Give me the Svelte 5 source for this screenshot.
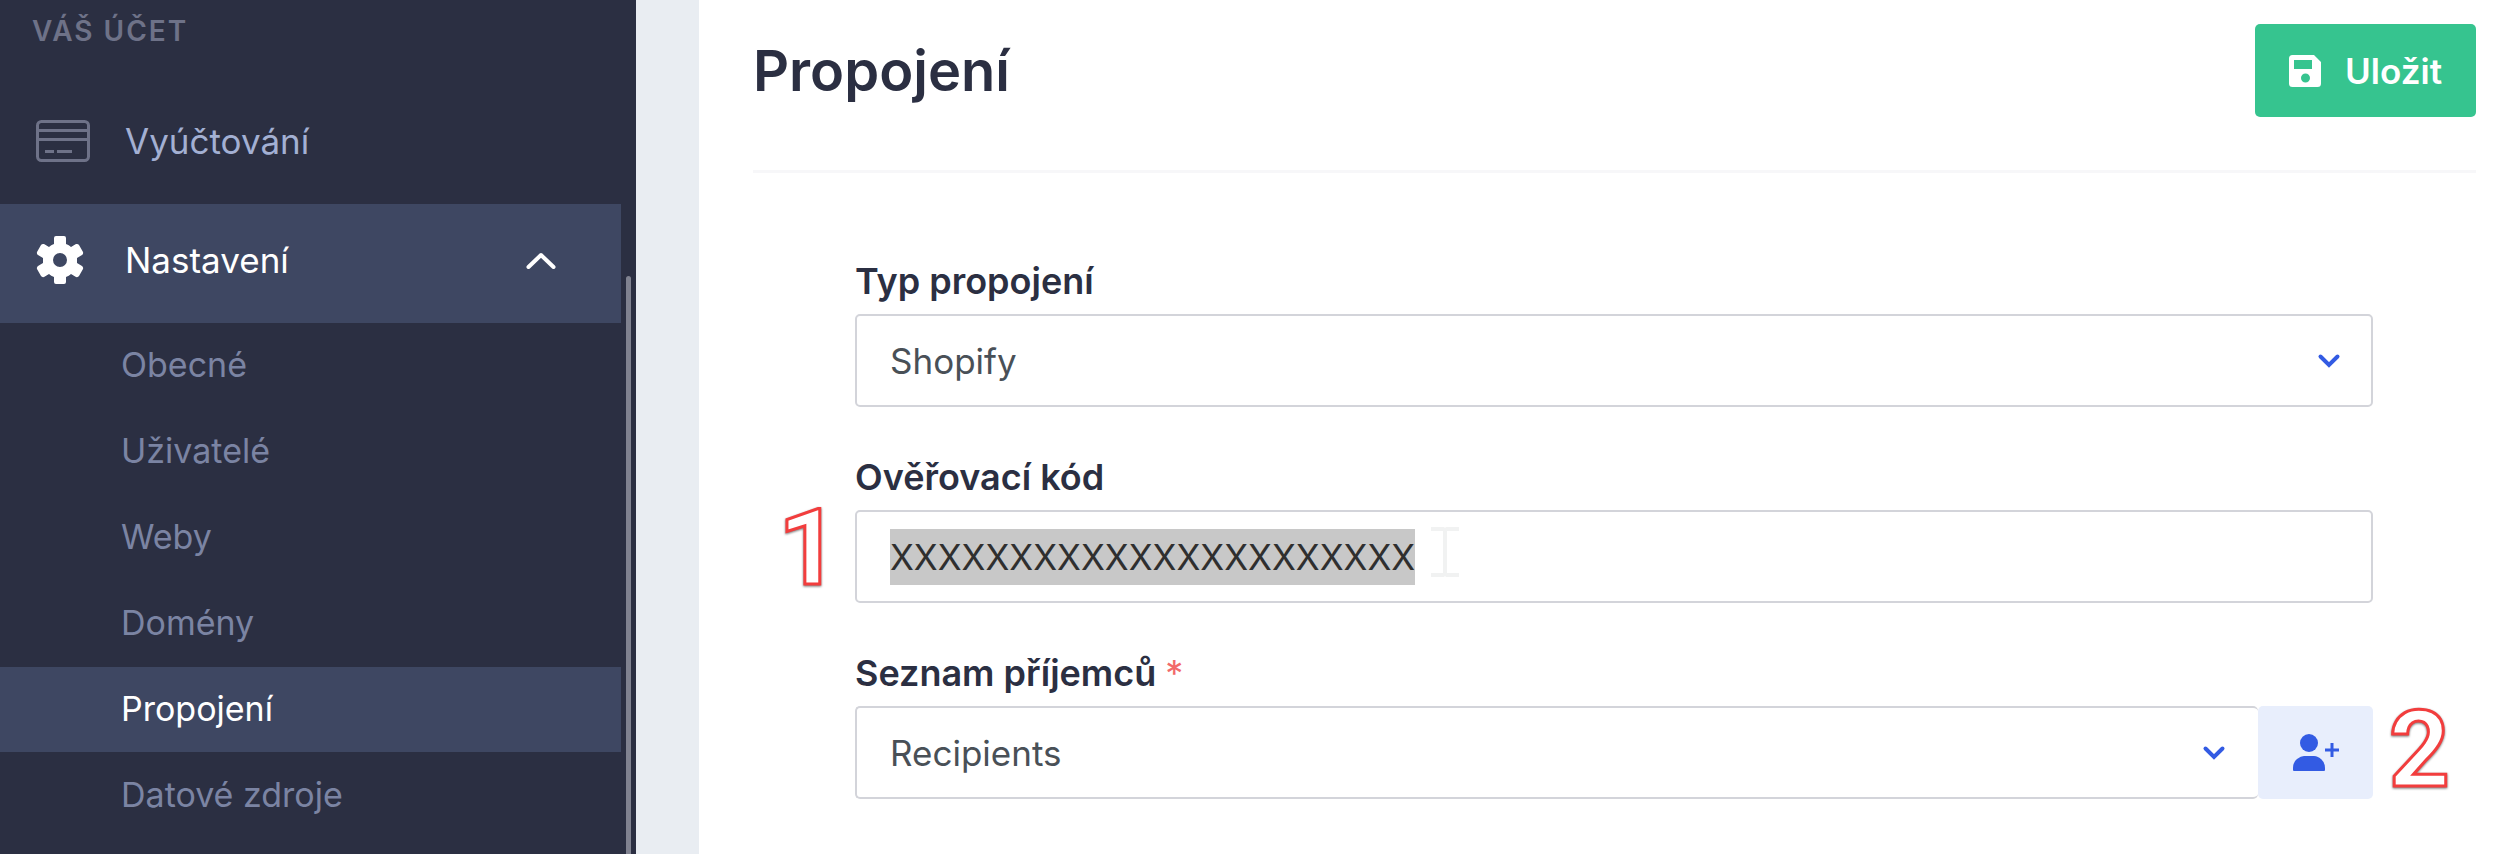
<script lang="ts">
  import { onMount } from 'svelte';

  const settings = ['Obecné', 'Uživatelé', 'Weby', 'Domény', 'Propojení', 'Datové zdroje'];

  let current = $state('Propojení');
  let open = $state(true);
  let type = $state('Shopify');
  let code = $state('XXXXXXXXXXXXXXXXXXXXXX');
  let list = $state('Recipients');
  let codeInput: HTMLInputElement;

  onMount(() => {
    codeInput.focus();
    codeInput.select();
  });
</script>

{#snippet chevron()}
  <svg class="chevron" width="24" height="16" viewBox="0 0 24 16" aria-hidden="true">
    <path d="M3.5 3.5 12 12l8.500-8.500" fill="none" stroke="currentColor" stroke-width="4" stroke-linecap="round" />
  </svg>
{/snippet}

<div class="layout">
  <aside class="sidebar">
    <nav class="nav">
      <h2 class="nav-title">Váš účet</h2>

      <a class="nav-item" href="#billing">
        <span class="nav-icon">
          <svg width="54" height="42" viewBox="0 0 54 42" fill="none" stroke="#6e7288" stroke-width="3" aria-hidden="true">
            <rect x="1.5" y="1.5" width="51" height="39" rx="4" />
            <path d="M2 10.500h50M2 19.500h50M9 31.500h9M21 31.500h15" />
          </svg>
        </span>
        Vyúčtování
      </a>

      <button class="nav-item active" aria-expanded={open} onclick={() => (open = !open)}>
        <span class="nav-icon">
          <svg width="48" height="48" viewBox="0 0 48 48" fill="#fff" aria-hidden="true">
            <path
              fill-rule="evenodd"
              d="M20 0h8q2 0 2 2v6q3 1 5 3l5-3q2-.5 3 1l4 7q.5 2-1 3l-5 3v5l5 3q1.500 1 1 3l-4 7q-1 1.500-3 1l-5-3q-2 2-5 3v5q0 2-2 2h-8q-2 0-2-2v-5q-3-1-5-3l-5 3q-2 .5-3-1l-4-7q-.5-2 1-3l5-3v-5l-5-3q-1.500-1-1-3l4-7q1-1.500 3-1l5 3q2-2 5-3V2q0-2 2-2zm4 17a7 7 0 1 0 0 14 7 7 0 1 0 0-14z"
            />
          </svg>
        </span>
        Nastavení
        <svg class="caret" class:closed={!open} width="30" height="18" viewBox="0 0 30 18" aria-hidden="true">
          <path d="M2.500 16 15 4 27.500 16" fill="none" stroke="#fff" stroke-width="4" stroke-linecap="round" stroke-linejoin="round" />
        </svg>
      </button>

      {#if open}
        <ul class="subnav">
          {#each settings as item}
            <li>
              <a href="#settings" class:current={item === current} onclick={() => (current = item)}>{item}</a>
            </li>
          {/each}
        </ul>
      {/if}
    </nav>
    <div class="scrollbar"></div>
  </aside>

  <main class="content">
    <header class="page-header">
      <h1>Propojení</h1>
      <button class="save">
        <svg width="32" height="32" viewBox="0 0 32 32" fill="#fff" aria-hidden="true">
          <path
            fill-rule="evenodd"
            d="M3.500 0H25l7 7v21.500q0 3.500-3.500 3.500h-25Q0 32 0 28.500v-25Q0 0 3.500 0zM5 5v9h18V5zm11.500 13.500a4.500 4.500 0 1 0 0 9 4.500 4.500 0 1 0 0-9z"
          />
        </svg>
        Uložit
      </button>
    </header>

    <form class="form">
      <div class="field">
        <label for="type">Typ propojení</label>
        <div class="control">
          <select id="type" class="box" bind:value={type}>
            <option>Shopify</option>
          </select>
          {@render chevron()}
        </div>
      </div>

      <div class="field">
        <label for="code">Ověřovací kód</label>
        <div class="control">
          <div class="box text-box">
            <input id="code" type="text" bind:value={code} bind:this={codeInput} />
          </div>
          <svg class="ibeam" width="28" height="50" viewBox="0 0 28 50" fill="none" stroke="#f1f2f2" stroke-width="4" aria-hidden="true">
            <path d="M0 2h12l2 1 2-1h12M0 48h12l2-1 2 1h12M14 3v44" />
          </svg>
          <span class="step before">1</span>
        </div>
      </div>

      <div class="field">
        <label for="list">Seznam příjemců <span class="required">*</span></label>
        <div class="group">
          <div class="control">
            <select id="list" class="box" bind:value={list}>
              <option>Recipients</option>
            </select>
            {@render chevron()}
          </div>
          <button class="add" type="button" aria-label="Přidat seznam">
            <svg width="46" height="38" viewBox="0 0 46 38" fill="#335be3" aria-hidden="true">
              <circle cx="16" cy="9" r="9" />
              <path d="M0 34q0-6 4-9t7-3h10q4 0 7.500 3.500T32 34v2q0 1-1 1H1q-1 0-1-1z" />
              <path d="M39 9v14M32 16h14" stroke="#335be3" stroke-width="3" />
            </svg>
          </button>
          <span class="step after">2</span>
        </div>
      </div>
    </form>
  </main>
</div>

<style>
  :global(body) {
    margin: 0;
    background: #fff;
  }
  .layout {
    display: flex;
    min-height: 100vh;
    background: #e9edf2;
    color: #2b2f42;
    font-family: Inter, 'Liberation Sans', sans-serif;
    font-size: 36px;
  }
  button,
  input,
  select {
    font: inherit;
  }
  button {
    border: 0;
    cursor: pointer;
  }

  .sidebar {
    display: flex;
    flex: 0 0 636px;
    background: #2b2f42;
  }
  .nav {
    flex: 1;
  }
  .nav-title {
    margin: 0 0 22px;
    padding-left: 32px;
    color: #6e7288;
    font-size: 28px;
    font-weight: 600;
    line-height: 63px;
    letter-spacing: 2px;
    text-transform: uppercase;
  }
  .nav-item {
    display: flex;
    align-items: center;
    box-sizing: border-box;
    width: 100%;
    height: 119px;
    padding: 0 65px 8px 36px;
    background: none;
    color: #a3b0d3;
    font-size: 35px;
    text-decoration: none;
  }
  .nav-item.active {
    background: #3e4762;
    color: #fff;
  }
  .nav-icon {
    display: flex;
    flex: 0 0 89px;
  }
  .caret {
    margin-left: auto;
  }
  .caret.closed {
    transform: rotate(180deg);
  }
  .subnav {
    margin: 0;
    padding: 0;
    list-style: none;
  }
  .subnav a {
    display: block;
    margin-bottom: 1px;
    padding: 0 0 2px 121px;
    color: #7b84a3;
    font-size: 34px;
    line-height: 83px;
    text-decoration: none;
  }
  .subnav a.current {
    background: #3e4762;
    color: #fff;
  }
  .scrollbar {
    flex: none;
    width: 5px;
    margin: 276px 5px 0;
    border-radius: 3px 3px 0 0;
    background: #808290;
  }

  .content {
    flex: 1;
    min-width: 0;
    margin-left: 63px;
    padding: 24px 31px 54px 54px;
    background: #fff;
  }
  .page-header {
    display: flex;
    align-items: center;
    justify-content: space-between;
    padding-bottom: 53px;
    border-bottom: 3px solid #f7f7f9;
  }
  h1 {
    margin: 0;
    font-size: 56px;
    font-weight: 600;
    line-height: 64px;
  }
  .save {
    display: flex;
    align-items: center;
    gap: 24px;
    height: 93px;
    padding: 0 34px;
    border-radius: 5px;
    background: #36c48f;
    color: #fff;
    font-size: 35px;
    font-weight: 600;
  }

  .form {
    display: flex;
    flex-direction: column;
    gap: 48px;
    padding: 86px 103px 0 102px;
  }
  label {
    display: block;
    margin-bottom: 11px;
    font-weight: 600;
    line-height: 44px;
  }
  .required {
    color: #f26a6a;
    font-weight: 400;
  }
  .control {
    position: relative;
    flex: 1;
  }
  .box {
    display: block;
    box-sizing: border-box;
    width: 100%;
    height: 93px;
    padding: 0 33px;
    border: 2px solid #d3d4da;
    border-radius: 5px;
    outline: 0;
    background: #fff;
    color: #495057;
    font-size: 35px;
    appearance: none;
  }
  .text-box {
    display: flex;
    align-items: center;
  }
  .text-box input {
    field-sizing: content;
    max-width: 100%;
    height: 56px;
    padding: 0;
    border: 0;
    outline: 0;
    background: #c8c8c8;
    color: #2f2f2f;
  }
  .text-box input::selection {
    background: #c8c8c8;
    color: #2f2f2f;
  }
  .chevron {
    position: absolute;
    top: 39px;
    right: 32px;
    color: #335be3;
    pointer-events: none;
  }
  .ibeam {
    position: absolute;
    top: 17px;
    left: 576px;
  }
  .group {
    position: relative;
    display: flex;
  }
  .group select {
    border-right: 0;
  }
  .add {
    display: flex;
    align-items: center;
    justify-content: center;
    width: 115px;
    padding: 0;
    border-radius: 5px;
    background: #e8eefc;
  }
  .step {
    position: absolute;
    color: #fff;
    font-family: Roboto, sans-serif;
    font-size: 106px;
    font-weight: 700;
    line-height: 88px;
    -webkit-text-stroke: 3px #f23d3d;
    filter: drop-shadow(0 1px 1px #777);
  }
  .step.before {
    top: -6px;
    right: calc(100% + 16px);
  }
  .step.after {
    top: 0;
    left: calc(100% + 16px);
  }
</style>
